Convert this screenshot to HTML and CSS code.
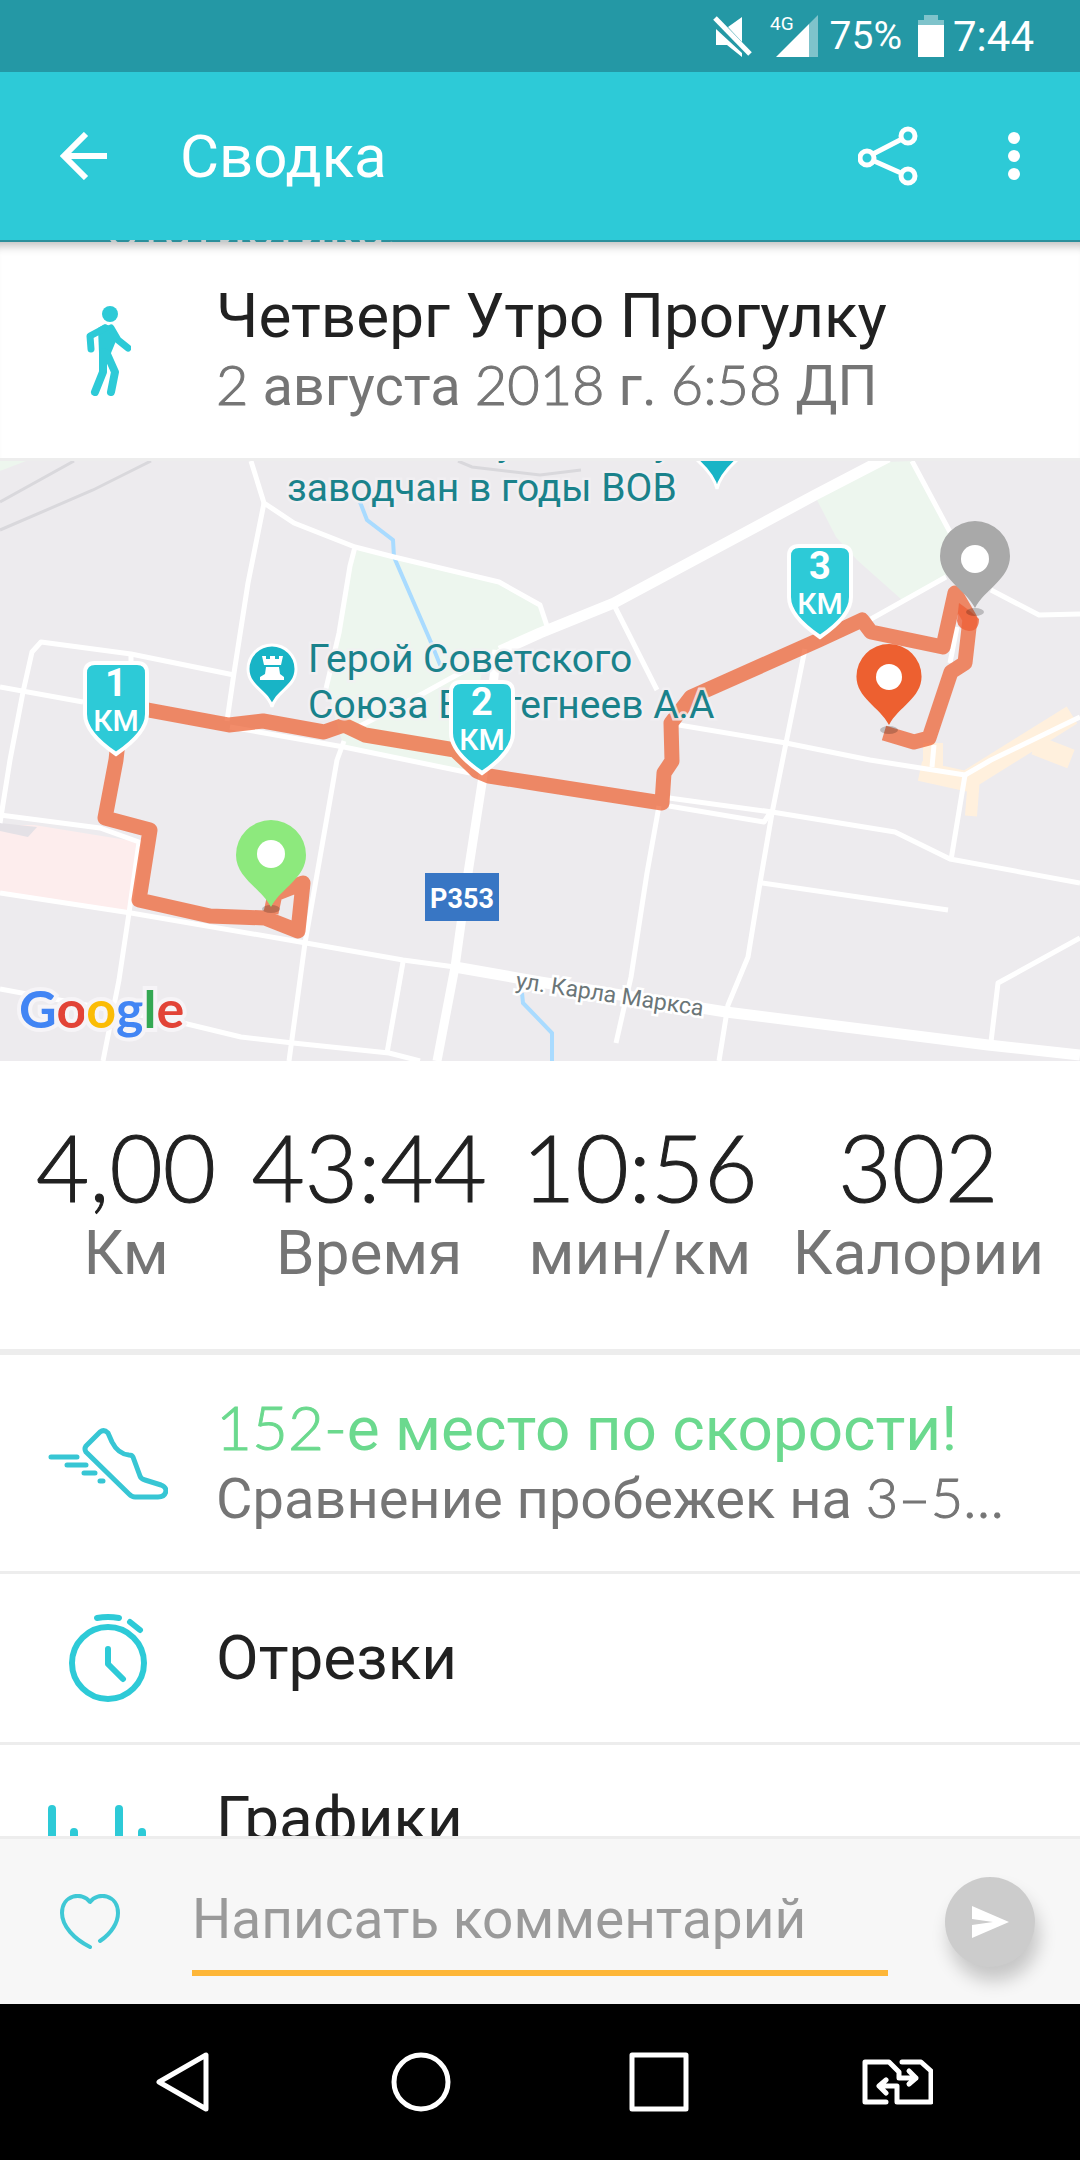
FILE: index.html
```html
<!DOCTYPE html>
<html lang="ru">
<head>
  <meta charset="UTF-8">
  <meta name="viewport" content="width=device-width, initial-scale=1.0">
  <title>Сводка</title>
  <link rel="stylesheet" href="styles.css">
</head>
<body>
  <div class="status-bar">
    <svg class="status-mute" viewBox="0 0 39 41" width="39" height="41" aria-hidden="true">
      <path d="M15 11L29 1V26zM3 13L29 37V41L14 29H3z" fill="#fff"/>
      <path d="M2 2L37 38" stroke="#fff" stroke-width="5"/>
    </svg>
    <div class="signal">
      <span class="network">4G</span>
      <svg viewBox="0 0 42 42" width="42" height="42" aria-hidden="true">
        <path d="M33 9L42 0V42H33z" fill="#7fc3cb"/>
        <path d="M0 42L33 9V42z" fill="#fff"/>
      </svg>
    </div>
    <span class="battery-text">75%</span>
    <svg class="battery" viewBox="0 0 26 42" width="26" height="42" aria-hidden="true">
      <path d="M6 0H20V5H26V10H0V5H6z" fill="#7fc3cb"/>
      <path d="M0 10H26V42H0z" fill="#fff"/>
    </svg>
    <span class="clock">7:44</span>
  </div>

  <header class="app-bar">
    <button type="button" class="icon-button" aria-label="Назад">
      <svg viewBox="0 0 48 48" width="48" height="48" fill="none" stroke="#fff" stroke-width="6">
        <path d="M26 2L4 24L26 46M4 24H47"/>
      </svg>
    </button>
    <h1>Сводка</h1>
    <button type="button" class="icon-button" aria-label="Поделиться">
      <svg viewBox="0 0 60 60" width="60" height="60" fill="none" stroke="#fff" stroke-width="5">
        <circle cx="50" cy="10" r="7"/>
        <circle cx="9" cy="32" r="7"/>
        <circle cx="50" cy="50" r="7"/>
        <path d="M15 28L44 13M16 35L43 47"/>
      </svg>
    </button>
    <button type="button" class="icon-button" aria-label="Ещё">
      <svg viewBox="0 0 12 48" width="12" height="48" fill="#fff">
        <circle cx="6" cy="6" r="6"/>
        <circle cx="6" cy="24" r="6"/>
        <circle cx="6" cy="42" r="6"/>
      </svg>
    </button>
  </header>

  <main class="content">
    <p class="scrolled">Статистика:</p>

    <section class="row">
      <div class="row-icon">
        <svg viewBox="0 0 46 90" width="46" height="90" fill="none" stroke="#2dcad7" stroke-linecap="round" stroke-linejoin="round" aria-hidden="true">
          <circle cx="25" cy="8" r="8" fill="#2dcad7" stroke="none"/>
          <path d="M13 22L19 18.500Q24 18 29 22L31 35L26 47H14z" fill="#2dcad7" stroke="none"/>
          <path d="M20 22L5 30L6 43M26 22L33 34L43 42" stroke-width="7"/>
          <path d="M18 46V66L10 86M22 48L30 66L26 86" stroke-width="8"/>
        </svg>
      </div>
      <div class="row-text">
        <h2>Четверг Утро Прогулку</h2>
        <p><span class="num">2</span> августа <span class="num">2018</span> г. <span class="num">6:58</span> ДП</p>
      </div>
    </section>

    <svg class="map" viewBox="0 0 1080 600" role="img" aria-label="Карта маршрута">
      <defs>
        <path id="pin" d="M0 87C-10 68 -35 58 -35 35A35 35 0 0 1 35 35C35 58 10 68 0 87z"/>
        <path id="shield" d="M-21 2H21Q31 2 31 12V53Q31 72 0 93Q-31 72 -31 53V12Q-31 2 -21 2z"/>
      </defs>
      <rect width="1080" height="600" fill="#edebee"/>

      <!-- parks and areas -->
      <g fill="#edf6ee">
        <path d="M0 0H26L0 10z"/>
        <path d="M358 88L394 96L499 121L540 144L547 168L500 190L482 210L465 311L344 287L328 232L341 160L350 105z"/>
        <path d="M817 39L884 1L912 0L950 71L946 116L902 139L857 99L836 76z"/>
      </g>
      <path d="M0 364L34 364L139 381L129 450L0 431z" fill="#fdeded"/>
      <path d="M0 362L37 366L28 376L0 370z" fill="#e4e1e6"/>
      <g fill="none" stroke="#fff0dd" stroke-width="20">
        <path d="M933 282V306M920 310L966 320L1072 254M1035 284L1071 298"/>
        <path d="M974 316L971 355" stroke-width="12"/>
      </g>

      <g fill="none" stroke="#d9d8dc" stroke-width="3">
        <path d="M0 41L74 0M0 69L93 29L151 0M458 0L472 6L540 14L581 9"/>
      </g>

      <g fill="none" stroke="#a9dbff" stroke-width="4">
        <path d="M360 41L367 59L393 79L394 96L430 179L441 206"/>
        <path d="M522 532L523 542L552 572V600"/>
      </g>

      <!-- streets -->
      <g fill="none" stroke="#fff" stroke-width="5" stroke-linejoin="round">
        <path d="M251 0L264 42L294 62L355 86L394 96L499 121L540 144L547 165"/>
        <path d="M264 42L248 122L234 212L227 260"/>
        <path d="M0 362L10 299L23 231L32 191L41 181L131 193L234 214"/>
        <path d="M0 226L83 241M131 193V210"/>
        <path d="M230 266L344 286L470 312"/>
        <path d="M355 86L350 105L339 172L325 232M344 280L337 299L305 482L289 600"/>
        <path d="M540 172L500 190L424 232L360 265"/>
        <path d="M0 354L100 367L139 381L129 452L119 519L103 600"/>
        <path d="M0 432L131 452L306 482L403 499L455 506"/>
        <path d="M0 528L183 562L241 576L293 582L389 592L420 600"/>
        <path d="M403 501L387 592"/>
        <path d="M659 345L647 412L631 516L616 582"/>
        <path d="M805 188L786 282L772 352L760 422L748 496L728 544L719 600"/>
        <path d="M669 337L772 351L895 371L950 398L1080 422"/>
        <path d="M669 345L764 361L770 352"/>
        <path d="M762 422L948 449"/>
        <path d="M679 264L786 282L870 299L965 314L991 299L1080 256"/>
        <path d="M934 284L932 306M965 314L951 399"/>
        <path d="M1080 477L998 522L991 581"/>
        <path d="M614 144L657 229M912 0L950 71M871 158L946 116"/>
        <path d="M991 129L1039 154L1080 153M957 166L950 202"/>
        <path d="M497 189L482 322L468 412L455 506L437 600" stroke-width="9"/>
        <path d="M500 190L540 172L614 142L815 34L888 -4M455 506L540 521L726 551L988 584L1080 594" stroke-width="11"/>
      </g>

      <!-- walked route -->
      <path d="M271 452L275 433L303 422L298 470L265 457L210 455L139 439L150 369L105 357L116 299L122 245L148 249L229 264L263 260L324 271L344 264L365 274L455 289L477 310L489 315L540 323L662 342L664 312L672 300L671 262L691 236L819 179L862 159L871 171L943 186L955 132L970 158L965 202L951 211L929 277L914 281L884 272" fill="none" stroke="#ed5f30" stroke-opacity=".72" stroke-width="15" stroke-linejoin="round"/>
      <path d="M959 142L970 150L979 158Q979 170 969 170Q958 168 957 160z" fill="#ee6038" opacity=".8"/>

      <g class="map-label">
        <text x="497" y="-6">у</text>
        <text x="654" y="-6">у</text>
        <text x="287" y="40">заводчан в годы ВОВ</text>
        <text x="308" y="211">Герой Советского</text>
        <text x="308" y="257">Союза Евстегнеев А.А</text>
      </g>
      <text class="street-label" transform="translate(515 527) rotate(8.500)">ул. Карла Маркса</text>

      <!-- places -->
      <g fill="#18b4c6" stroke="#fff" stroke-width="3">
        <path d="M696 -2H738Q720 14 717 28Q714 14 696 -2z"/>
        <path d="M272 246C268 230 248 226 248 208A24 24 0 0 1 296 208C296 226 276 230 272 246z"/>
      </g>
      <path d="M262 195H266V198H270V195H275V198H279V195H283L281 204H264zM266 206H279L280 213L284 216V219H260V216L265 213z" fill="#fff"/>

      <rect x="425" y="412" width="74" height="48" fill="#3876c4"/>
      <text class="road-number" x="462" y="447">Р353</text>

      <!-- kilometre marks -->
      <g class="mark" transform="translate(116 200)">
        <use href="#shield"/>
        <text class="mark-number" y="35">1</text>
        <text class="mark-unit" y="70">КМ</text>
      </g>
      <g class="mark" transform="translate(482 219)">
        <use href="#shield"/>
        <text class="mark-number" y="35">2</text>
        <text class="mark-unit" y="70">КМ</text>
      </g>
      <g class="mark" transform="translate(820 83)">
        <use href="#shield"/>
        <text class="mark-number" y="35">3</text>
        <text class="mark-unit" y="70">КМ</text>
      </g>

      <g fill="#000" opacity=".2">
        <ellipse cx="975" cy="151" rx="9" ry="4"/>
        <ellipse cx="889" cy="269" rx="9" ry="4"/>
        <ellipse cx="271" cy="448" rx="9" ry="4"/>
      </g>
      <use href="#pin" x="975" y="60" fill="#a9a9a9"/>
      <use href="#pin" transform="translate(889 183) scale(.93)" fill="#ed6030"/>
      <use href="#pin" x="271" y="359" fill="#8de97d"/>
      <g fill="#fff">
        <circle cx="975" cy="98" r="14"/>
        <circle cx="889" cy="216" r="13"/>
        <circle cx="271" cy="393" r="14"/>
      </g>

      <text class="google" x="19" y="567"><tspan class="g-blue">G</tspan><tspan class="g-red">o</tspan><tspan class="g-yellow">o</tspan><tspan class="g-blue">g</tspan><tspan class="g-green">l</tspan><tspan class="g-red">e</tspan></text>
    </svg>

    <dl class="stats">
      <div class="stat">
        <dd>4,00</dd>
        <dt>Км</dt>
      </div>
      <div class="stat">
        <dd>43:44</dd>
        <dt>Время</dt>
      </div>
      <div class="stat">
        <dd>10:56</dd>
        <dt>мин/км</dt>
      </div>
      <div class="stat">
        <dd>302</dd>
        <dt>Калории</dt>
      </div>
    </dl>

    <a class="row" href="#compare">
      <div class="row-icon">
        <svg viewBox="0 0 120 72" width="120" height="72" fill="none" stroke="#37c6d4" stroke-width="5" stroke-linecap="round" stroke-linejoin="round" aria-hidden="true">
          <path d="M52 4L38 18Q36 21 38 24L81 66Q84 69 87 69H110Q117 69 118 63Q118 59 113 57L97 52Q93 51 92 48L85 29Q84 27 81 27Q70 26 64 14L60 5Q56 1 52 4z"/>
          <path d="M3 29H29M19 37H38M36 45H47M52 53H55"/>
        </svg>
      </div>
      <div class="row-text">
        <h2 class="place"><span class="num">152-</span>е место по скорости!</h2>
        <p>Сравнение пробежек на <span class="num">3–5…</span></p>
      </div>
    </a>

    <a class="row row-single" href="#splits">
      <div class="row-icon">
        <svg viewBox="0 0 78 90" width="78" height="90" fill="none" stroke="#2dcad7" stroke-width="6" stroke-linecap="round" stroke-linejoin="round" aria-hidden="true">
          <circle cx="39" cy="50" r="36"/>
          <path d="M28 5Q39 3 50 5M61 9L71 17M39 36V51L54 66"/>
        </svg>
      </div>
      <div class="row-text">
        <h2>Отрезки</h2>
      </div>
    </a>

    <a class="row" href="#charts">
      <div class="row-icon">
        <svg viewBox="0 0 120 70" width="120" height="70" fill="none" stroke="#2dcad7" stroke-width="8" stroke-linecap="round" aria-hidden="true">
          <path d="M4 25V66M26 48V66M71 25V66M94 48V66"/>
        </svg>
      </div>
      <div class="row-text">
        <h2>Графики</h2>
      </div>
    </a>
  </main>

  <form class="comment-bar">
    <button type="button" class="icon-button" aria-label="Нравится">
      <svg viewBox="0 0 60 56" width="60" height="56" fill="none" stroke="#3fc8d5" stroke-width="4" stroke-linecap="round" stroke-linejoin="round">
        <path d="M40 47C52 39 58 28 58 19C58 1 38 -3 30 8C22 -3 2 1 2 19C2 32 14 45 30 53"/>
      </svg>
    </button>
    <input type="text" class="comment-input" name="comment" placeholder="Написать комментарий" aria-label="Написать комментарий">
    <button type="submit" class="send-button" aria-label="Отправить">
      <svg viewBox="0 0 37 32" width="37" height="32" fill="#fff">
        <path d="M0 0L37 16L0 32V19L21 16L0 13z"/>
      </svg>
    </button>
  </form>

  <nav class="system-nav">
    <button type="button" class="icon-button" aria-label="Назад">
      <svg viewBox="0 0 54 60" width="54" height="60" fill="none" stroke="#fff" stroke-width="5" stroke-linejoin="round">
        <path d="M50 3V57L3 30z"/>
      </svg>
    </button>
    <button type="button" class="icon-button" aria-label="Домой">
      <svg viewBox="0 0 60 60" width="60" height="60" fill="none" stroke="#fff" stroke-width="5">
        <circle cx="30" cy="30" r="27"/>
      </svg>
    </button>
    <button type="button" class="icon-button" aria-label="Недавние">
      <svg viewBox="0 0 60 60" width="60" height="60" fill="none" stroke="#fff" stroke-width="5" stroke-linejoin="round">
        <path d="M3 3H57V57H3z"/>
      </svg>
    </button>
    <button type="button" class="icon-button" aria-label="Сменить SIM-карту">
      <svg viewBox="0 0 71 46" width="71" height="46" fill="none" stroke="#fff" stroke-width="5" stroke-linecap="round" stroke-linejoin="round">
        <path d="M24 43H3V3H27L37 13V19H54M47 12L54 19L47 25"/>
        <path d="M40 3H59L69 12V43H35V27H18M24 21L17 27L24 34"/>
      </svg>
    </button>
  </nav>
</body>
</html>
```
FILE: styles.css
```css
* {
  box-sizing: border-box;
}

body {
  font-family: Roboto, sans-serif;
  margin: 0;
  height: 100vh;
  display: flex;
  flex-direction: column;
  background-color: #fff;
  color: #212121;
}

h1, h2, p, dl, dd, dt {
  margin: 0;
  font-weight: normal;
}

button {
  padding: 0;
  border: none;
  background: none;
  cursor: pointer;
}

svg {
  display: block;
}

.icon-button {
  display: flex;
  justify-content: center;
  align-items: center;
}

/* status bar */
.status-bar {
  flex: none;
  display: flex;
  justify-content: flex-end;
  align-items: center;
  height: 72px;
  padding-right: 46px;
  background-color: #2498a5;
  color: #fff;
}

.status-mute {
  margin-right: 18px;
}

.signal {
  display: flex;
  align-items: flex-start;
}

.network {
  margin-right: -18px;
  font-size: 19px;
  line-height: 18px;
}

.battery-text {
  margin-left: 12px;
  font-size: 39px;
}

.battery {
  margin: 0 9px 0 16px;
}

.clock {
  font-size: 42px;
}

/* app bar */
.app-bar {
  flex: none;
  display: flex;
  align-items: center;
  height: 168px;
  padding: 0 60px;
  background-color: #2dcad7;
  color: #fff;
}

.app-bar h1 {
  flex: 1;
  margin-left: 72px;
  font-size: 60px;
}

.app-bar .icon-button + .icon-button {
  margin-left: 90px;
}

/* scrolling content */
.content {
  flex: 1;
  min-height: 0;
  overflow: hidden;
}

.scrolled {
  display: flex;
  align-items: flex-end;
  height: 2px;
  padding-left: 105px;
  overflow: hidden;
  background-color: #2a8f9b;
  color: #c4cccd;
  font-size: 52px;
  line-height: 24px;
}

.scrolled + .row {
  box-shadow: inset 0 12px 10px -8px rgba(0, 0, 0, 0.25);
}

.row {
  display: flex;
  align-items: center;
  padding: 39px 0 37px;
  color: inherit;
  text-decoration: none;
  border-bottom: 3px solid #ededed;
}

.row-icon {
  display: flex;
  justify-content: center;
  width: 216px;
}

.row-text {
  flex: 1;
}

.row h2 {
  font-size: 62px;
  line-height: 70px;
}

.row p {
  color: #757575;
  font-size: 56px;
  line-height: 70px;
}

.row .place {
  color: #6bd98e;
}

.row-single {
  padding: 38px 0;
  min-height: 171px;
}

/* light digits, thickened a little to sit next to the regular letters */
.num,
.stats dd {
  font-family: Lato, sans-serif;
  font-weight: 300;
  -webkit-text-stroke: 1px currentColor;
}

.num {
  line-height: 1;
}

/* map */
.map {
  width: 100%;
  height: auto;
}

.map-label {
  font-size: 39px;
  fill: #1a828b;
  stroke: #f3f1f4;
  stroke-width: 5px;
  stroke-opacity: 0.8;
  paint-order: stroke;
}

.street-label {
  font-size: 23px;
  fill: #6b7678;
  stroke: #fff;
  stroke-width: 5px;
  paint-order: stroke;
}

.road-number {
  font-size: 27px;
  font-weight: bold;
  fill: #fff;
  text-anchor: middle;
}

.mark {
  fill: #2dcad7;
  stroke: #fff;
  stroke-width: 4px;
}

.mark text {
  fill: #fff;
  stroke: none;
  text-anchor: middle;
}

.mark-number {
  font-size: 38px;
  font-weight: bold;
}

.mark-unit {
  font-size: 30px;
  font-weight: 500;
}

.google {
  font-family: Lato, sans-serif;
  font-size: 52px;
  font-weight: bold;
  stroke: #f6f4f7;
  stroke-width: 8px;
  paint-order: stroke;
}

.g-blue {
  fill: #4285f4;
}

.g-red {
  fill: #e24337;
}

.g-yellow {
  fill: #fbbc05;
}

.g-green {
  fill: #34a853;
}

/* totals */
.stats {
  display: flex;
  justify-content: space-between;
  padding: 56px 36px 60px;
  border-bottom: 6px solid #ededed;
  text-align: center;
}

.stats dd {
  font-size: 92px;
  line-height: 100px;
}

.stats dt {
  color: #757575;
  font-size: 62px;
  line-height: 72px;
}

/* comment */
.comment-bar {
  flex: none;
  display: flex;
  align-items: center;
  height: 168px;
  padding: 0 45px 0 60px;
  border-top: 3px solid #ededed;
  background-color: #f7f7f7;
}

.comment-input {
  flex: 1;
  min-width: 0;
  height: 108px;
  margin: 0 57px 0 72px;
  padding: 0;
  border: none;
  border-bottom: 6px solid #fdb638;
  outline: none;
  background: none;
  font-family: inherit;
  font-size: 55px;
}

.comment-input::placeholder {
  color: #9a9a9a;
  opacity: 1;
}

.send-button {
  display: flex;
  justify-content: center;
  align-items: center;
  width: 90px;
  height: 90px;
  border-radius: 50%;
  background-color: #ccc;
  box-shadow: 4px 14px 18px rgba(0, 0, 0, 0.2);
}

/* system navigation */
.system-nav {
  flex: none;
  display: grid;
  grid-template-columns: repeat(4, 1fr);
  height: 156px;
  padding: 0 64px;
  background-color: #000;
}
```
